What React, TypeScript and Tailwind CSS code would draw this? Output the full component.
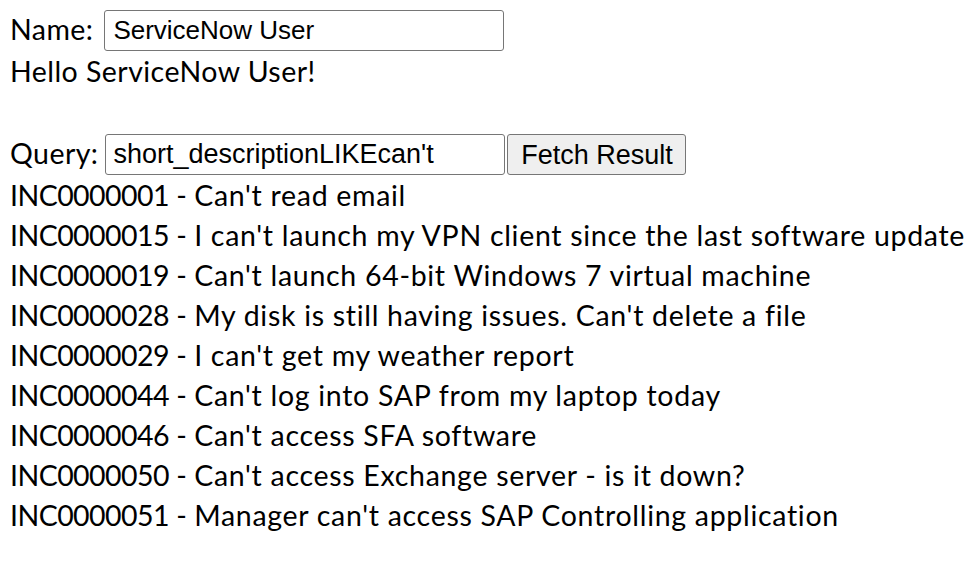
import { useState } from "react";

const results = [
  ["INC0000001", "Can't read email"],
  ["INC0000015", "I can't launch my VPN client since the last software update"],
  ["INC0000019", "Can't launch 64-bit Windows 7 virtual machine"],
  ["INC0000028", "My disk is still having issues. Can't delete a file"],
  ["INC0000029", "I can't get my weather report"],
  ["INC0000044", "Can't log into SAP from my laptop today"],
  ["INC0000046", "Can't access SFA software"],
  ["INC0000050", "Can't access Exchange server - is it down?"],
  ["INC0000051", "Manager can't access SAP Controlling application"],
];

export default function App() {
  const [name, setName] = useState("ServiceNow User");
  const [query, setQuery] = useState("short_descriptionLIKEcan't");

  return (
    <div className="w-[974px] h-[566px] bg-white text-black px-[10px] pt-[10px] font-['Lato',sans-serif] text-[28.5px] tracking-[0.45px] leading-[40px] whitespace-nowrap">
      <div className="flex items-center h-[41px]">
        <span className="-mt-[3px]">Name:</span>
        <input
          value={name}
          onChange={(e) => setName(e.target.value)}
          className="ml-[11px] w-[400px] h-[41px] border border-[#767676] rounded-[3px] px-[8px] font-['Liberation_Sans',sans-serif] text-[26px] tracking-normal outline-none"
        />
      </div>
      <div>Hello {name}!</div>
      <br />
      <div className="flex items-center h-[41px] mt-[3px]">
        <span className="-mt-[3px]">Query:</span>
        <input
          value={query}
          onChange={(e) => setQuery(e.target.value)}
          className="ml-[7px] w-[400px] h-[41px] border border-[#767676] rounded-[3px] px-[7px] font-['Liberation_Sans',sans-serif] text-[27px] tracking-normal outline-none"
        />
        <button className="ml-[2px] w-[179px] h-[41px] border border-[#767676] rounded-[3px] bg-[#efefef] font-['Liberation_Sans',sans-serif] text-[27px] tracking-normal">
          Fetch Result
        </button>
      </div>
      <div>
        {results.map(([id, desc]) => (
          <div key={id}>
            <span className="tracking-[-0.55px]">{id}</span>
            <span className="tracking-normal"> - </span>
            <span className="tracking-[0.7px]">{desc}</span>
          </div>
        ))}
      </div>
    </div>
  );
}
